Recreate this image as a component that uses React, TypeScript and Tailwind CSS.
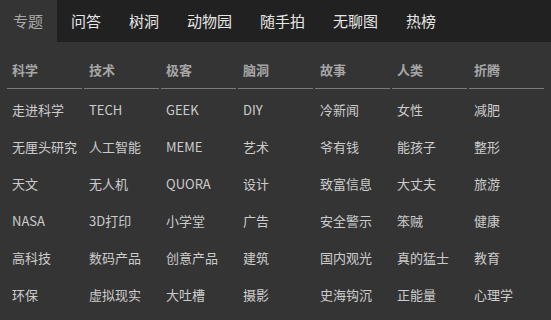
const tabs = ["专题", "问答", "树洞", "动物园", "随手拍", "无聊图", "热榜"];

const columns = [
  { title: "科学", items: ["走进科学", "无厘头研究", "天文", "NASA", "高科技", "环保"] },
  { title: "技术", items: ["TECH", "人工智能", "无人机", "3D打印", "数码产品", "虚拟现实"] },
  { title: "极客", items: ["GEEK", "MEME", "QUORA", "小学堂", "创意产品", "大吐槽"] },
  { title: "脑洞", items: ["DIY", "艺术", "设计", "广告", "建筑", "摄影"] },
  { title: "故事", items: ["冷新闻", "爷有钱", "致富信息", "安全警示", "国内观光", "史海钩沉"] },
  { title: "人类", items: ["女性", "能孩子", "大丈夫", "笨贼", "真的猛士", "正能量"] },
  { title: "折腾", items: ["减肥", "整形", "旅游", "健康", "教育", "心理学"] },
];

export default function App() {
  return (
    <div
      className="w-[551px] h-[320px] overflow-hidden bg-[#343434]"
      style={{ fontFamily: '"Noto Sans CJK SC", "Noto Sans", sans-serif' }}
    >
      {/* Top tabs */}
      <div className="flex h-[42px]">
        {tabs.map((t, i) => (
          <div
            key={t}
            className={
              i === 0
                ? "px-[13px] w-[57px] flex items-center text-[15px] text-[#a8a8a8] bg-[#343434]"
                : "px-[14px] flex items-center text-[15px] text-[#e6e6e6] bg-[#212121]"
            }
          >
            {t}
          </div>
        ))}
        <div className="flex-1 bg-[#212121]" />
      </div>

      {/* Category grid */}
      <div className="flex gap-[2px] pl-[7px]">
        {columns.map((c) => (
          <div key={c.title} className="w-[75px] flex flex-col">
            <div className="h-[47px] flex items-center pl-[5px] pt-[10px] text-[13px] font-bold text-[#a6a6a6] border-b border-[#7a7a7a]">
              {c.title}
            </div>
            <div className="pt-[2px] flex flex-col">
              {c.items.map((it) => (
                <div
                  key={it}
                  className="h-[37px] flex items-center pl-[5px] text-[13px] text-[#cccccc] whitespace-nowrap"
                >
                  {it}
                </div>
              ))}
            </div>
          </div>
        ))}
      </div>
    </div>
  );
}
